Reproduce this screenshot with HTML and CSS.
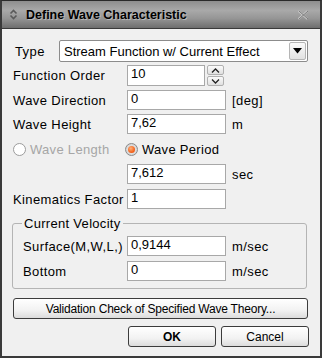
FILE: index.html
```html
<!DOCTYPE html>
<html lang="en">
  <head>
    <meta charset="utf-8" />
    <title>Define Wave Characteristic</title>
    <link rel="stylesheet" href="styles.css">
  </head>

  <body>
    <div class="window">
      <div class="titlebar">
        <svg class="title-icon" width="9" height="11" viewBox="0 0 9 11">
          <path d="M1.5 4.5 L4.5 1.5 L7.5 4.5 M1.5 6.5 L4.5 9.5 L7.5 6.5" fill="none" stroke="#5a5a5a" stroke-width="1.6"/>
        </svg>
        <span class="title">Define Wave Characteristic</span>
        <svg class="close-icon" width="12" height="10" viewBox="0 0 12 10">
          <path d="M1.5 1 L10.5 9 M10.5 1 L1.5 9" fill="none" stroke="#c8c8c8" stroke-width="1.8"/>
          <path d="M2 1 L11 9 M11 1 L2 9" fill="none" stroke="#7a7a7a" stroke-width="1"/>
        </svg>
      </div>

      <div class="content">
        <div class="row row-type">
          <span class="label label-type">Type</span>
          <div class="select">
            <span class="select-text">Stream Function w/ Current Effect</span>
            <span class="select-btn">
              <svg width="9" height="6" viewBox="0 0 9 6"><path d="M0 0 H9 L4.5 5.5 Z" fill="#000"/></svg>
            </span>
          </div>
        </div>

        <div class="row row-spin">
          <span class="label">Function Order</span>
          <div class="field field-spin">10</div>
          <div class="spinner">
            <span class="spin-btn">
              <svg width="9" height="5" viewBox="0 0 9 5"><path d="M1 4.5 L4.5 1 L8 4.5" fill="none" stroke="#222" stroke-width="1.3"/></svg>
            </span>
            <span class="spin-btn">
              <svg width="9" height="5" viewBox="0 0 9 5"><path d="M1 0.5 L4.5 4 L8 0.5" fill="none" stroke="#222" stroke-width="1.3"/></svg>
            </span>
          </div>
        </div>

        <div class="row">
          <span class="label">Wave Direction</span>
          <div class="field">0</div>
          <span class="unit">[deg]</span>
        </div>

        <div class="row">
          <span class="label">Wave Height</span>
          <div class="field">7,62</div>
          <span class="unit">m</span>
        </div>

        <div class="row row-radio">
          <span class="radio-item radio-disabled">
            <span class="radio"></span>Wave Length
          </span>
          <span class="radio-item">
            <span class="radio radio-on"><span class="dot"></span></span>Wave Period
          </span>
        </div>

        <div class="row">
          <span class="label"></span>
          <div class="field">7,612</div>
          <span class="unit">sec</span>
        </div>

        <div class="row">
          <span class="label">Kinematics Factor</span>
          <div class="field">1</div>
        </div>

        <fieldset class="group">
          <legend>Current Velocity</legend>
          <div class="row row-group">
            <span class="label label-group">Surface(M,W,L,)</span>
            <div class="field">0,9144</div>
            <span class="unit">m/sec</span>
          </div>
          <div class="row row-group">
            <span class="label label-group">Bottom</span>
            <div class="field">0</div>
            <span class="unit">m/sec</span>
          </div>
        </fieldset>

        <button class="btn btn-wide" type="button">Validation Check of Specified Wave Theory...</button>

        <div class="actions">
          <button class="btn btn-ok" type="button">OK</button>
          <button class="btn" type="button">Cancel</button>
        </div>
      </div>
    </div>
  </body>
</html>
```

FILE: styles.css
```css
body {
  margin: 0;
  padding: 0;
  font-family: "Liberation Sans", Arial, sans-serif;
  font-size: 13px;
  color: #000;
  background: #f0f0f0;
}

.window {
  width: 322px;
  height: 358px;
  box-sizing: border-box;
  border: 2px solid #3a3a3a;
  border-top: 1px solid #2a2a2a;
  background: #f0f0f0;
  overflow: hidden;
}

.titlebar {
  height: 27px;
  display: flex;
  align-items: center;
  padding: 0 8px 0 7px;
  background: linear-gradient(#8e8e8e, #a9a9a9 35%, #959595 65%, #6e6e6e);
  border-bottom: 1px solid #3a3a3a;
}

.title-icon {
  margin-right: 8px;
}

.title {
  flex: 1;
  font-family: "Liberation Sans", Arial, sans-serif;
  font-weight: bold;
  font-size: 12.5px;
  color: #000;
  text-shadow: 1px 1px 0 rgba(255, 255, 255, 0.35);
}

.close-icon {
  margin-right: 3px;
}

.content {
  padding: 11px 11px 0 11px;
}

.row {
  display: flex;
  align-items: center;
  height: 20px;
  margin-top: 5px;
}

.row-type {
  height: 22px;
  margin-top: 0;
}

.row-spin {
  height: 21px;
  margin-top: 3px;
}

.row-spin + .row {
  margin-top: 4px;
}

.row-spin + .row + .row {
  margin-top: 4px;
}

.label {
  width: 114px;
  flex-shrink: 0;
  letter-spacing: 0.4px;
}

.label-type {
  width: 44px;
  padding-left: 2px;
}

.select {
  width: 249px;
  height: 22px;
  box-sizing: border-box;
  display: flex;
  align-items: center;
  background: #fff;
  border: 1px solid #8c8c8c;
  border-radius: 2px;
}

.select-text {
  flex: 1;
  padding-left: 4px;
  font-size: 13px;
}

.select-btn {
  width: 17px;
  height: 18px;
  margin-right: 1px;
  display: flex;
  align-items: center;
  justify-content: center;
  border: 1px solid #b5b5b5;
  border-radius: 2px;
  background: linear-gradient(#fafafa, #e2e2e2);
  box-sizing: border-box;
}

.field {
  width: 99px;
  height: 20px;
  box-sizing: border-box;
  border: 1px solid #a8a8a8;
  background: #fff;
  padding: 0 3px;
  line-height: 16px;
}

.field-spin {
  width: 78px;
  height: 21px;
}

.spinner {
  display: flex;
  flex-direction: column;
  justify-content: space-between;
  height: 21px;
  margin-left: 2px;
}

.spin-btn {
  width: 17px;
  height: 10px;
  box-sizing: border-box;
  display: flex;
  align-items: center;
  justify-content: center;
  border: 1px solid #b0b0b0;
  border-radius: 2px;
  background: linear-gradient(#fbfbfb, #e0e0e0);
}

.unit {
  margin-left: 6px;
  letter-spacing: 0.4px;
}

.row-radio {
  height: 20px;
}

.radio-item {
  display: flex;
  align-items: center;
  width: 112px;
  letter-spacing: 0.3px;
}

.radio-disabled {
  color: #a6a6a6;
}

.radio {
  width: 13px;
  height: 13px;
  box-sizing: border-box;
  border-radius: 50%;
  border: 1px solid #9c9c9c;
  background: #fff;
  margin-right: 4px;
  display: flex;
  align-items: center;
  justify-content: center;
}

.radio-on {
  border-color: #8a8a8a;
  background: radial-gradient(#f4f4f4, #c8c8c8);
}

.dot {
  width: 7px;
  height: 7px;
  border-radius: 50%;
  background: radial-gradient(circle at 40% 35%, #ffb27a, #f05a14 70%);
}

.group {
  margin: 7px 0 0 -1px;
  padding: 0 0 7px 10px;
  width: 295px;
  box-sizing: border-box;
  border: 1px solid #b4b4b4;
  border-radius: 3px;
}

.group legend {
  padding: 0 2px;
  margin-left: -1px;
  line-height: 15px;
  letter-spacing: 0.3px;
}

.row-group {
  margin-top: 5px;
}

.label-group {
  width: 104px;
}

.btn {
  height: 21px;
  width: 88px;
  box-sizing: border-box;
  font-family: "Liberation Sans", Arial, sans-serif;
  font-size: 12px;
  border: 1px solid #3c3c3c;
  border-radius: 3px;
  background: linear-gradient(#ffffff, #f2f2f2 60%, #dcdcdc);
  padding: 0;
  color: #000;
}

.btn-wide {
  display: block;
  width: 295px;
  margin-top: 9px;
  font-size: 12px;
  letter-spacing: -0.2px;
}

.actions {
  display: flex;
  justify-content: flex-end;
  gap: 5px;
  margin-top: 7px;
}

.btn-ok {
  font-weight: bold;
}
```
